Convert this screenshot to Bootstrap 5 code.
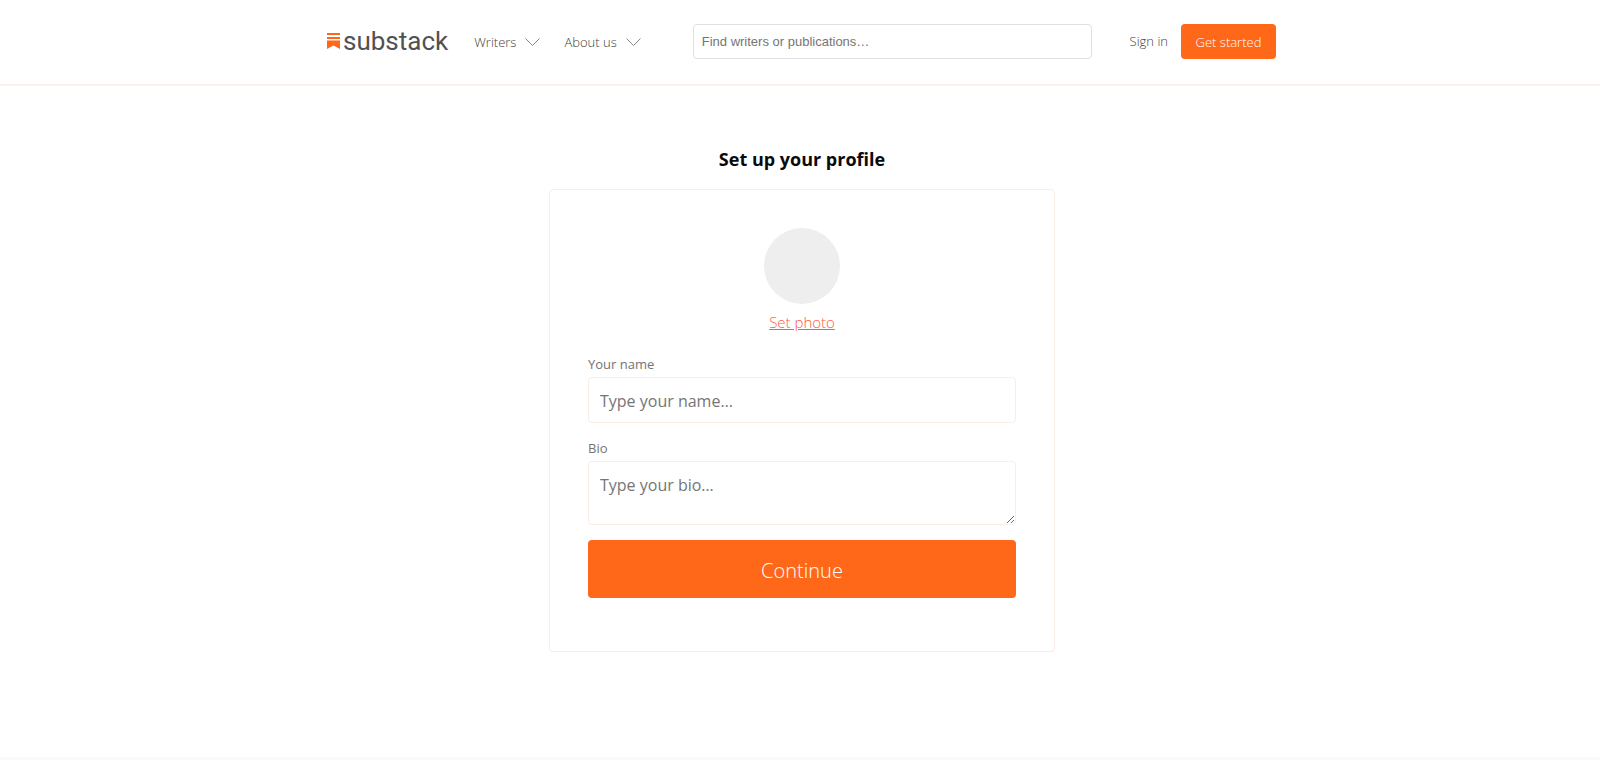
<!DOCTYPE html>
<html lang="en">
<head>
<meta charset="utf-8">
<meta name="viewport" content="width=device-width, initial-scale=1">
<title>Set up your profile - Substack</title>
<link href="https://cdn.jsdelivr.net/npm/bootstrap@5.3.0/dist/css/bootstrap.min.css" rel="stylesheet">
<style>
  :root { --orange: #ff6719; --line: #faece6; }
  body { font-family: "Open Sans", sans-serif; color: #404040; background: #fff; }
  .site-header { border-bottom: 2px solid #fcf0ed; }
  .header-inner { max-width: 952px; min-height: 84px; padding-left: 3px; padding-bottom: 2px; }
  .brand { color: #505254; font: 26px/32px Roboto, sans-serif; gap: 3px; }
  .main-menu { margin-left: 26px; padding-top: 2px; }
  .menu-btn { font-size: 13px; font-weight: 300; line-height: 20px; color: #404040; gap: 9px; }
  .search-box { font: 13px/20px "Liberation Sans", sans-serif; height: 35px; padding: 0 8px; border-color: #e0e0e0; border-radius: 4px; }
  .search-box::placeholder, .profile-field::placeholder { color: #757575; }
  .search-wrap { margin-left: 52px; margin-right: 38px; }
  .sign-in { font-size: 13px; font-weight: 300; color: #404040; margin-right: 13px; padding-top: 2px; }
  .btn-orange, .btn-orange:hover { background: var(--orange); color: #fff; border: 0; border-radius: 4px; font-weight: 300; }
  .btn-start { font-size: 13px; height: 35px; width: 95px; padding: 4px 0 0; }
  .profile-main { max-width: 510px; padding: 61px 0 105px 4px; }
  .profile-title { font-size: 18px; line-height: 24px; font-weight: 700; color: #0a0a0a; margin-bottom: 18px; }
  .profile-card { border-color: var(--line); border-radius: 4px; padding: 38px 38px 53px; }
  .avatar { width: 76px; height: 76px; background: #eee; }
  .set-photo { font-size: 15px; line-height: 20px; font-weight: 300; color: #ff5a3c; margin-top: 8px; margin-bottom: 22px; }
  .field-label { font-size: 13px; line-height: 20px; color: #737373; margin-bottom: 3px; }
  .profile-field { font-size: 16px; line-height: 24px; padding: 11px 11px 9px; border-color: var(--line); border-radius: 4px; }
  .name-field { height: 46px; margin-bottom: 15px; }
  .bio-field { height: 64px; margin-bottom: 15px; }
  .btn-continue { font-size: 20px; height: 58px; padding: 8px 0 4px; }
  .site-footer { border-top: 3px solid #fafafa; }
</style>
</head>
<body>
<header class="site-header">
  <div class="header-inner container-fluid pe-0 d-flex align-items-center">
    <a href="#" class="brand d-flex align-items-center text-decoration-none" aria-label="substack">
      <svg width="13" height="16" viewBox="0 0 13 16" fill="#ff6719" aria-hidden="true"><path d="M0 0h13v2H0zM0 4h13v2H0zM0 7.500h13V16L6.500 12.500 0 16z"/></svg>
      <span>substack</span>
    </a>
    <nav class="main-menu d-flex" aria-label="Main">
      <button type="button" class="menu-btn btn p-0 border-0 d-flex align-items-center me-4">Writers
        <svg width="15" height="9" viewBox="0 0 15 9" fill="none" stroke="#888" aria-hidden="true"><path d="M.5.500 7.500 7.500 14.500.500"/></svg>
      </button>
      <button type="button" class="menu-btn btn p-0 border-0 d-flex align-items-center">About us
        <svg width="15" height="9" viewBox="0 0 15 9" fill="none" stroke="#888" aria-hidden="true"><path d="M.5.500 7.500 7.500 14.500.500"/></svg>
      </button>
    </nav>
    <form class="search-wrap flex-grow-1" role="search">
      <input class="search-box form-control" type="search" placeholder="Find writers or publications…" aria-label="Find writers or publications">
    </form>
    <a href="#" class="sign-in text-decoration-none text-nowrap">Sign in</a>
    <button type="button" class="btn btn-orange btn-start">Get started</button>
  </div>
</header>
<main class="profile-main container-fluid">
  <h1 class="profile-title text-center">Set up your profile</h1>
  <form class="profile-card card">
    <div class="avatar rounded-circle mx-auto"></div>
    <a href="#" class="set-photo align-self-center">Set photo</a>
    <label class="field-label" for="name">Your name</label>
    <input class="profile-field name-field form-control" id="name" type="text" placeholder="Type your name…">
    <label class="field-label" for="bio">Bio</label>
    <textarea class="profile-field bio-field form-control" id="bio" placeholder="Type your bio…"></textarea>
    <button type="button" class="btn btn-orange btn-continue w-100">Continue</button>
  </form>
</main>
<footer class="site-footer"></footer>
<script src="https://cdn.jsdelivr.net/npm/bootstrap@5.3.0/dist/js/bootstrap.bundle.min.js"></script>
</body>
</html>
